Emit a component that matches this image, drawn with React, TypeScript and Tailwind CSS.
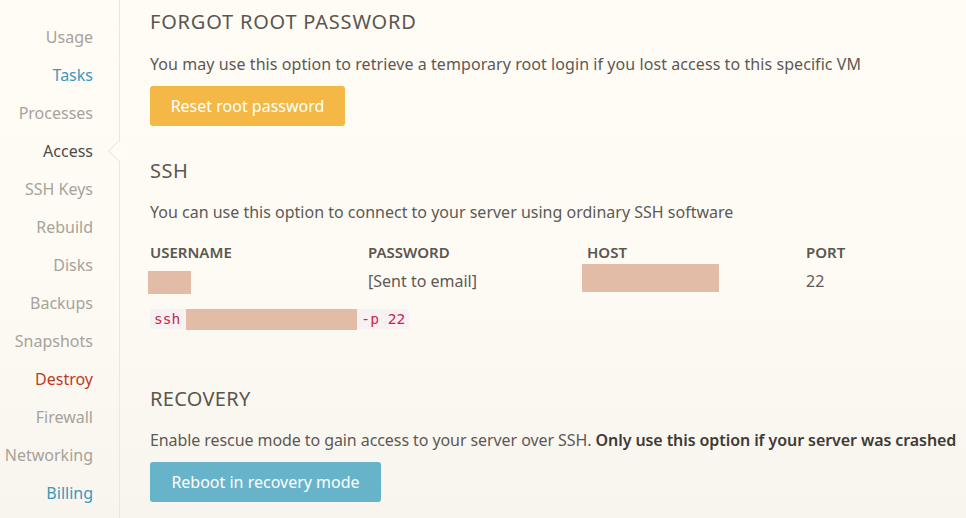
import React from "react";

const navItems = [
  { label: "Usage", tone: "text-[#a7a29a]" },
  { label: "Tasks", tone: "text-[#3b98bd]" },
  { label: "Processes", tone: "text-[#a7a29a]" },
  { label: "Access", tone: "text-[#4f4b46]", active: true },
  { label: "SSH Keys", tone: "text-[#a7a29a]" },
  { label: "Rebuild", tone: "text-[#a7a29a]" },
  { label: "Disks", tone: "text-[#a7a29a]" },
  { label: "Backups", tone: "text-[#a7a29a]" },
  { label: "Snapshots", tone: "text-[#a7a29a]" },
  { label: "Destroy", tone: "text-[#bd3b1e]" },
  { label: "Firewall", tone: "text-[#a7a29a]" },
  { label: "Networking", tone: "text-[#a7a29a]" },
  { label: "Billing", tone: "text-[#3b98bd]" },
];

function Redacted({ className }: { className: string }) {
  return <span className={`inline-block bg-[#e2bca7] ${className}`} />;
}

export default function App() {
  return (
    <div
      className="flex h-[518px] w-[966px] overflow-hidden bg-gradient-to-b from-[#fffcf6] via-[#fefbf5] to-[#f8f5ef] text-[#5d5954]"
      style={{ fontFamily: '"Noto Sans", "Open Sans", sans-serif' }}
    >
      {/* Sidebar */}
      <nav className="relative w-[120px] shrink-0 border-r border-[#ebe7df] pt-[18px]">
        {navItems.map((item) => (
          <div
            key={item.label}
            className={`relative flex h-[38px] items-center justify-end pr-[26px] text-[16px] ${item.tone}`}
          >
            {item.label}
            {item.active && (
              <span className="absolute right-[-7px] top-1/2 h-[15px] w-[15px] -translate-y-1/2 rotate-45 border-b border-l border-[#ebe7df] bg-[#fffcf6]" />
            )}
          </div>
        ))}
      </nav>

      {/* Main content */}
      <main className="flex-1 whitespace-nowrap pl-[30px] pt-[8px]">
        <h2 className="text-[20px] leading-[28px] tracking-[0.8px] text-[#5a5650]">
          FORGOT ROOT PASSWORD
        </h2>
        <p className="mt-[16px] text-[16px] leading-[24px] tracking-[0.07px]">
          You may use this option to retrieve a temporary root login if you lost access to this specific VM
        </p>
        <button className="mt-[10px] h-[40px] w-[195px] rounded-[3px] bg-[#f3b845] text-[16px] text-white">
          Reset root password
        </button>

        <h2 className="mt-[31px] text-[20px] leading-[28px] tracking-[0.5px] text-[#5a5650]">SSH</h2>
        <p className="mt-[15px] text-[16px] leading-[24px]">
          You can use this option to connect to your server using ordinary SSH software
        </p>

        <div className="mt-[18px] grid grid-cols-[218px_219px_219px_160px] text-[15px] font-semibold leading-[20px] text-[#5a5650]">
          <div>USERNAME</div>
          <div>PASSWORD</div>
          <div>HOST</div>
          <div>PORT</div>
        </div>
        <div className="mt-[3px] grid h-[32px] grid-cols-[218px_219px_219px_160px] items-center text-[16px]">
          <div className="-ml-[2px] flex">
            <Redacted className="mt-[2px] h-[23px] w-[43px]" />
          </div>
          <div>[Sent to email]</div>
          <div className="-ml-[5px] flex">
            <Redacted className="-mt-[7px] h-[28px] w-[137px]" />
          </div>
          <div>22</div>
        </div>

        <div className="mt-[12px] flex">
          <code
            className="flex h-[20px] items-center rounded-[4px] bg-[#f8f1f3] px-[4px] text-[14.6px] text-[#c7254e]"
            style={{ fontFamily: '"DejaVu Sans Mono", "Liberation Mono", monospace' }}
          >
            ssh
            <Redacted className="ml-[6px] mr-[4px] h-[21px] w-[171px]" />
            <span>-p 22</span>
          </code>
        </div>

        <h2 className="mt-[56px] text-[20px] leading-[28px] tracking-[0.3px] text-[#5a5650]">RECOVERY</h2>
        <p className="mt-[15px] text-[16px] leading-[24px] tracking-[-0.08px]">
          Enable rescue mode to gain access to your server over SSH.{" "}
          <span className="font-semibold text-[#3f3b37]">Only use this option if your server was crashed</span>
        </p>
        <button className="mt-[10px] h-[40px] w-[231px] rounded-[3px] bg-[#67b4ca] text-[16px] text-white">
          Reboot in recovery mode
        </button>
      </main>
    </div>
  );
}
